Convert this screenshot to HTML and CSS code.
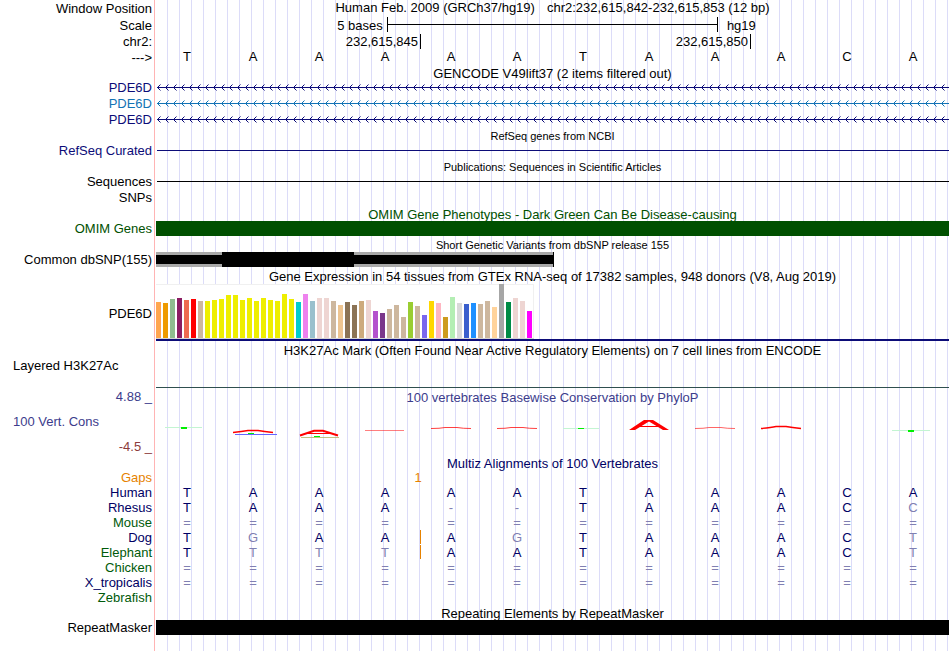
FILE: index.html
```html
<!DOCTYPE html>
<html lang="en">
<head>
    <meta charset="UTF-8">
    <meta name="viewport" content="width=device-width, initial-scale=1.0">
    <title>Human chr2:232,615,842-232,615,853</title>
    <link rel="stylesheet" href="styles.css">
    <script src="tracks.js" defer></script>
</head>
<body>
<main class="browser">
    <!-- ruler -->
    <div class="row ruler">
        <div class="label">Window Position</div>
        <h1 class="position"><span>Human Feb. 2009 (GRCh37/hg19)</span><span>chr2:232,615,842-232,615,853 (12 bp)</span></h1>
    </div>
    <div class="row ruler">
        <div class="label">Scale</div>
        <div class="scale"><span>5 bases</span><span class="scale_bar"></span><span>hg19</span></div>
    </div>
    <div class="row">
        <div class="label">chr2:</div>
        <div class="bases">
            <span class="tick tick_845">232,615,845</span>
            <span class="tick tick_850">232,615,850</span>
        </div>
    </div>
    <div class="row">
        <div class="label">---&gt;</div>
        <div class="bases letters" id="sequence"></div>
    </div>

    <!-- genes -->
    <h2 class="title title_short">GENCODE V49lift37 (2 items filtered out)</h2>
    <div class="row gene">
        <div class="label">PDE6D</div>
        <svg class="gene_line" width="100%" height="16" aria-hidden="true">
            <defs>
                <pattern id="strand" width="8" height="16" patternUnits="userSpaceOnUse">
                    <path class="chevron" d="M4.5 4.5 L1.5 7.5 L4.5 10.5"/>
                </pattern>
                <pattern id="strand_alt" width="8" height="16" patternUnits="userSpaceOnUse">
                    <path class="chevron chevron_alt" d="M4.5 4.5 L1.5 7.5 L4.5 10.5"/>
                </pattern>
            </defs>
            <rect width="100%" height="16" fill="url(#strand)"/>
            <rect x="1" y="7" width="100%" height="1" fill="currentColor"/>
        </svg>
    </div>
    <div class="row gene gene_alt">
        <div class="label">PDE6D</div>
        <svg class="gene_line" width="100%" height="16" aria-hidden="true">
            <rect width="100%" height="16" fill="url(#strand_alt)"/>
            <rect x="1" y="7" width="100%" height="1" fill="currentColor"/>
        </svg>
    </div>
    <div class="row gene">
        <div class="label">PDE6D</div>
        <svg class="gene_line" width="100%" height="16" aria-hidden="true">
            <rect width="100%" height="16" fill="url(#strand)"/>
            <rect x="1" y="7" width="100%" height="1" fill="currentColor"/>
        </svg>
    </div>

    <h2 class="title title_small">RefSeq genes from NCBI</h2>
    <div class="row gene">
        <div class="label">RefSeq Curated</div>
        <div class="line"></div>
    </div>

    <h2 class="title title_small">Publications: Sequences in Scientific Articles</h2>
    <div class="row">
        <div class="label">Sequences</div>
        <div class="line"></div>
    </div>
    <div class="row">
        <div class="label">SNPs</div>
    </div>

    <h2 class="title omim">OMIM Gene Phenotypes - Dark Green Can Be Disease-causing</h2>
    <div class="row block_row omim">
        <div class="label">OMIM Genes</div>
        <div class="block"></div>
    </div>

    <h2 class="title title_snp">Short Genetic Variants from dbSNP release 155</h2>
    <div class="row block_row">
        <div class="label">Common dbSNP(155)</div>
        <div class="bases">
            <span class="snp_thin"></span>
            <span class="snp_thick"></span>
        </div>
    </div>

    <!-- expression -->
    <h2 class="title title_tall">Gene Expression in 54 tissues from GTEx RNA-seq of 17382 samples, 948 donors (V8, Aug 2019)</h2>
    <div class="row gtex">
        <div class="label">PDE6D</div>
        <div class="gtex_track"><div class="gtex_chart" id="gtex"></div></div>
    </div>

    <h2 class="title title_tall">H3K27Ac Mark (Often Found Near Active Regulatory Elements) on 7 cell lines from ENCODE</h2>
    <div class="row h3k">
        <div class="label label_left">Layered H3K27Ac</div>
        <div class="h3k_line"></div>
    </div>

    <!-- conservation -->
    <div class="row cons_head">
        <div class="label">4.88 _</div>
        <h2 class="cons_title">100 vertebrates Basewise Conservation by PhyloP</h2>
    </div>
    <div class="row cons">
        <div class="cons_labels">
            <div class="label label_left">100 Vert. Cons</div>
            <div class="label cons_min">-4.5 _</div>
        </div>
        <svg width="100%" height="50" viewBox="0 0 793 50" preserveAspectRatio="none" aria-hidden="true">
            <g fill="none" stroke="#ff0000">
                <path d="M77 27.5 Q86 26.5 92 25.5 H102 Q108 26.5 117 27.5" stroke-width="1.4"/>
                <path d="M144 30.5 L158 25.8 H167 L182 30.5" stroke-width="2"/>
                <path d="M152 28.5 H174"/>
                <path d="M209 25.5 H248" stroke-opacity=".5"/>
                <path d="M275 23.5 Q284 23.5 289 22.5 H301 Q307 23.5 315 23.5" stroke-opacity=".75"/>
                <path d="M341 23.5 Q350 23.5 355 22.5 H367 Q373 23.5 381 23.5" stroke-opacity=".75"/>
                <path d="M539 23.5 Q548 23.5 553 22.5 H565 Q571 23.5 579 23.5" stroke-opacity=".6"/>
                <path d="M605 23.5 Q615 22.5 620 21.5 H630 Q636 22.5 645 23.5" stroke-width="1.4"/>
                <path d="M482 21.5 H503"/>
            </g>
            <path d="M473 25 L488 15 H497 L513 25 H507 L493 16.5 L479 25 Z" fill="#ff0000"/>
            <path d="M79 29.5 H121" stroke="#6666ff"/>
            <path d="M145 32.5 H183" stroke="#b4b464" stroke-opacity=".8"/>
            <path d="M9 22.5 H46 M407 23.5 H443 M736 25.5 H774" stroke="#c3f5d2"/>
            <path d="M25 22 H31 V24 H25 Z M92 28 H98 V29 H92 Z M158 31 H164 V32 H158 Z M422 23 H428 V24 H422 Z M752 25 H758 V27 H752 Z" fill="#00f000"/>
        </svg>
    </div>

    <!-- alignments -->
    <h2 class="title multiz">Multiz Alignments of 100 Vertebrates</h2>
    <table class="alignments">
        <tbody id="alignments"></tbody>
    </table>

    <h2 class="title title_repeat">Repeating Elements by RepeatMasker</h2>
    <div class="row block_row">
        <div class="label">RepeatMasker</div>
        <div class="block"></div>
    </div>
</main>
</body>
</html>
```
FILE: styles.css
```css
body {
    margin: 0;
    background-color: #fff;
    color: #000;
    font-family: "Liberation Sans", Arial, sans-serif;
    font-size: 13px;
}
h1, h2 {
    margin: 0;
    font-size: 13px;
    font-weight: normal;
    text-align: center;
}

/* red edge of the label column, then a guideline every 12px */
.browser {
    box-sizing: border-box;
    min-height: 100vh;
    padding-right: 1px;
    background-image:
        linear-gradient(#ffb4b4, #ffb4b4),
        linear-gradient(#fff, #fff),
        repeating-linear-gradient(to right, transparent 0 11px, #dcdcf8 11px 12px);
    background-size: 1px 100%, 156px 100%, 100% 100%;
    background-position: 154px 0, 0 0, 156px 0;
    background-repeat: no-repeat;
}
.row {
    display: grid;
    grid-template-columns: 156px 1fr;
    grid-template-rows: 100%;
    height: 16px;
    line-height: 16px;
}
.label {
    padding-right: 4px;
    text-align: right;
    white-space: nowrap;
}
.label_left {
    padding-left: 13px;
    text-align: left;
}
.title {
    height: 15px;
    padding-left: 156px;
    line-height: 15px;
}
.title_short {
    height: 14px;
}
.title_small {
    font-size: 11px;
    line-height: 17px;
}
.title_snp {
    height: 16px;
    font-size: 11px;
    line-height: 19px;
}
.title_tall {
    height: 17px;
    line-height: 20px;
}
.bases {
    display: grid;
    grid-template-columns: repeat(12, 1fr);
    padding-right: 1px;
}

/* ruler */
.ruler {
    height: 17px;
    line-height: 17px;
}
.position {
    display: flex;
    justify-content: center;
    gap: 12px;
    line-height: 15px;
}
.scale {
    display: flex;
    justify-content: center;
    padding-right: 12px;
}
.scale_bar {
    box-sizing: border-box;
    width: 42.4%;
    height: 15px;
    margin: 0 9px 0 4px;
    border: solid #000;
    border-width: 0 1px;
    background: linear-gradient(#000, #000) 0 7px / 100% 1px no-repeat;
}
.tick {
    height: 15px;
    margin-right: -1px;
    padding-right: 2px;
    border-right: 1px solid #000;
    text-align: right;
}
.tick_845 {
    grid-column: 1 / 5;
}
.tick_850 {
    grid-column: 5 / 10;
}
.letters span {
    padding-right: 4px;
    text-align: center;
    line-height: 14px;
}

/* genes */
.gene {
    color: #0c0c78;
}
.gene_alt {
    color: #1273b5;
}
.gene_line {
    display: block;
}
.chevron {
    fill: none;
    stroke: #0c0c78;
}
.chevron_alt {
    stroke: #1273b5;
}
.line {
    height: 1px;
    margin: 7px 0 0 1px;
    background-color: currentColor;
}

/* solid blocks */
.block_row {
    height: 15px;
    line-height: 15px;
}
.block {
    background-color: currentColor;
}
.omim {
    color: #005000;
}
.title.omim {
    line-height: 17px;
}
.snp_thin {
    grid-area: 1 / 1 / 2 / 7;
    margin-right: -2px;
    border-right: 1px solid #000;
    background: linear-gradient(#a9a9a9 3px, #000 3px 12px, #a9a9a9 12px);
}
.snp_thick {
    grid-area: 1 / 2 / 2 / 4;
    background-color: #000;
}

/* GTEx */
.gtex {
    height: 57px;
    line-height: 59px;
}
.gtex_track {
    border-bottom: 2px solid #0c0c78;
}
.gtex_chart {
    box-sizing: border-box;
    display: flex;
    align-items: flex-end;
    gap: 2px;
    width: 378px;
    height: 55px;
    border-bottom: 1px solid #d3d3d3;
    background-color: #fff;
    box-shadow: inset 0 1px #f0f0f0, inset -1px 0 #f0f0f0;
}
.gtex_bar {
    width: 5px;
}

.h3k {
    height: 30px;
    line-height: 16px;
}
.h3k_line {
    border-bottom: 1px solid #2f4f4f;
}

/* conservation */
.cons_head {
    height: 17px;
    line-height: 18px;
    color: #3c3c8c;
}
.cons_title {
    line-height: 20px;
}
.cons {
    height: 50px;
}
.cons_labels {
    display: flex;
    flex-direction: column;
    justify-content: space-between;
    padding: 9px 0 0;
    color: #3c3c8c;
}
.cons_min {
    color: #8c3c3c;
}

/* alignments */
.multiz {
    line-height: 17px;
    color: #000064;
}
.alignments {
    width: calc(100% - 1px);
    border-collapse: collapse;
    table-layout: fixed;
    color: #000064;
}
.alignments th {
    width: 152px;
    height: 15px;
    padding: 0 4px 0 0;
    font-weight: normal;
    line-height: 15px;
    text-align: right;
}
.alignments td {
    padding: 0 4px 0 0;
    line-height: 15px;
    text-align: center;
}
.alignments .green {
    color: #005a0a;
}
.alignments .gaps {
    color: #e68200;
}
.alignments .diff {
    color: #8080b2;
}
.alignments .insert {
    background: linear-gradient(#e68200, #e68200) 0 0 / 1px 14px no-repeat;
}
.title_repeat {
    line-height: 17px;
}
```
FILE: tracks.js
```javascript
const sequence = 'TAAAAATAAACA';

// bar height in pixels and tissue colour
const gtex = [
    [36, '#ffa54f'], [35, '#ee9a00'], [39, '#8fbc8f'], [40, '#8b1c62'], [38, '#ee6a50'], [39, '#ff0000'],
    [37, '#cdb79e'], [37, '#eeee00'], [38, '#eeee00'], [39, '#eeee00'], [43, '#eeee00'], [43, '#eeee00'],
    [38, '#eeee00'], [40, '#eeee00'], [37, '#eeee00'], [40, '#eeee00'], [38, '#eeee00'], [37, '#eeee00'],
    [44, '#eeee00'], [39, '#eeee00'], [36, '#00cdcd'], [44, '#ee82ee'], [37, '#9ac0cd'], [40, '#eed5d2'],
    [40, '#eed5d2'], [37, '#cdb79e'], [33, '#eec591'], [36, '#8b7355'], [33, '#8b7355'], [37, '#cdaa7d'],
    [38, '#eed5d2'], [27, '#b452cd'], [25, '#7a378b'], [29, '#cdb79e'], [33, '#cdb79e'], [21, '#cdb79e'],
    [36, '#9acd32'], [32, '#cdb79e'], [23, '#7a67ee'], [37, '#ffd700'], [35, '#ffb6c1'], [21, '#cd9b1d'],
    [41, '#b4eeb4'], [35, '#d9d9d9'], [34, '#3a5fcd'], [35, '#1e90ff'], [34, '#cdb79e'], [37, '#cdb79e'],
    [31, '#ffd39b'], [54, '#a6a6a6'], [36, '#008b45'], [40, '#eed5d2'], [37, '#eed5d2'], [27, '#ff00ff']
];

// insert: index of the base that follows the insertion
const species = [
    { name: 'Human', bases: 'TAAAAATAAACA' },
    { name: 'Rhesus', bases: 'TAAA--TAAACC' },
    { name: 'Mouse', bases: '============', green: true },
    { name: 'Dog', bases: 'TGAAAGTAAACT', insert: 4 },
    { name: 'Elephant', bases: 'TTTTAATAAACT', insert: 4, green: true },
    { name: 'Chicken', bases: '============', green: true },
    { name: 'X_tropicalis', bases: '============' },
    { name: 'Zebrafish', bases: '            ', green: true }
];

document.getElementById('sequence').innerHTML = [...sequence].map(base => `<span>${base}</span>`).join('');

document.getElementById('gtex').innerHTML = gtex
    .map(([height, color]) => `<div class="gtex_bar" style="height: ${height}px; background-color: ${color}"></div>`)
    .join('');

// fixed layout takes its columns from the first row
let rows = '<colgroup><col class="name_col">' + '<col>'.repeat(12) + '</colgroup><tbody>';
rows += '<tr class="gaps"><th scope="row">Gaps</th><td></td><td></td><td></td><td colspan="2">1</td>' + '<td></td>'.repeat(7) + '</tr>';
species.forEach(s => {
    rows += `<tr><th scope="row" class="${s.green ? 'green' : ''}">${s.name}</th>`;
    [...s.bases].forEach((base, i) => {
        const classes = [];
        if (base !== sequence[i]) classes.push('diff');
        if (i === s.insert) classes.push('insert');
        rows += `<td class="${classes.join(' ')}">${base}</td>`;
    });
    rows += '</tr>';
});
document.querySelector('.alignments').innerHTML = rows + '</tbody>';
```
